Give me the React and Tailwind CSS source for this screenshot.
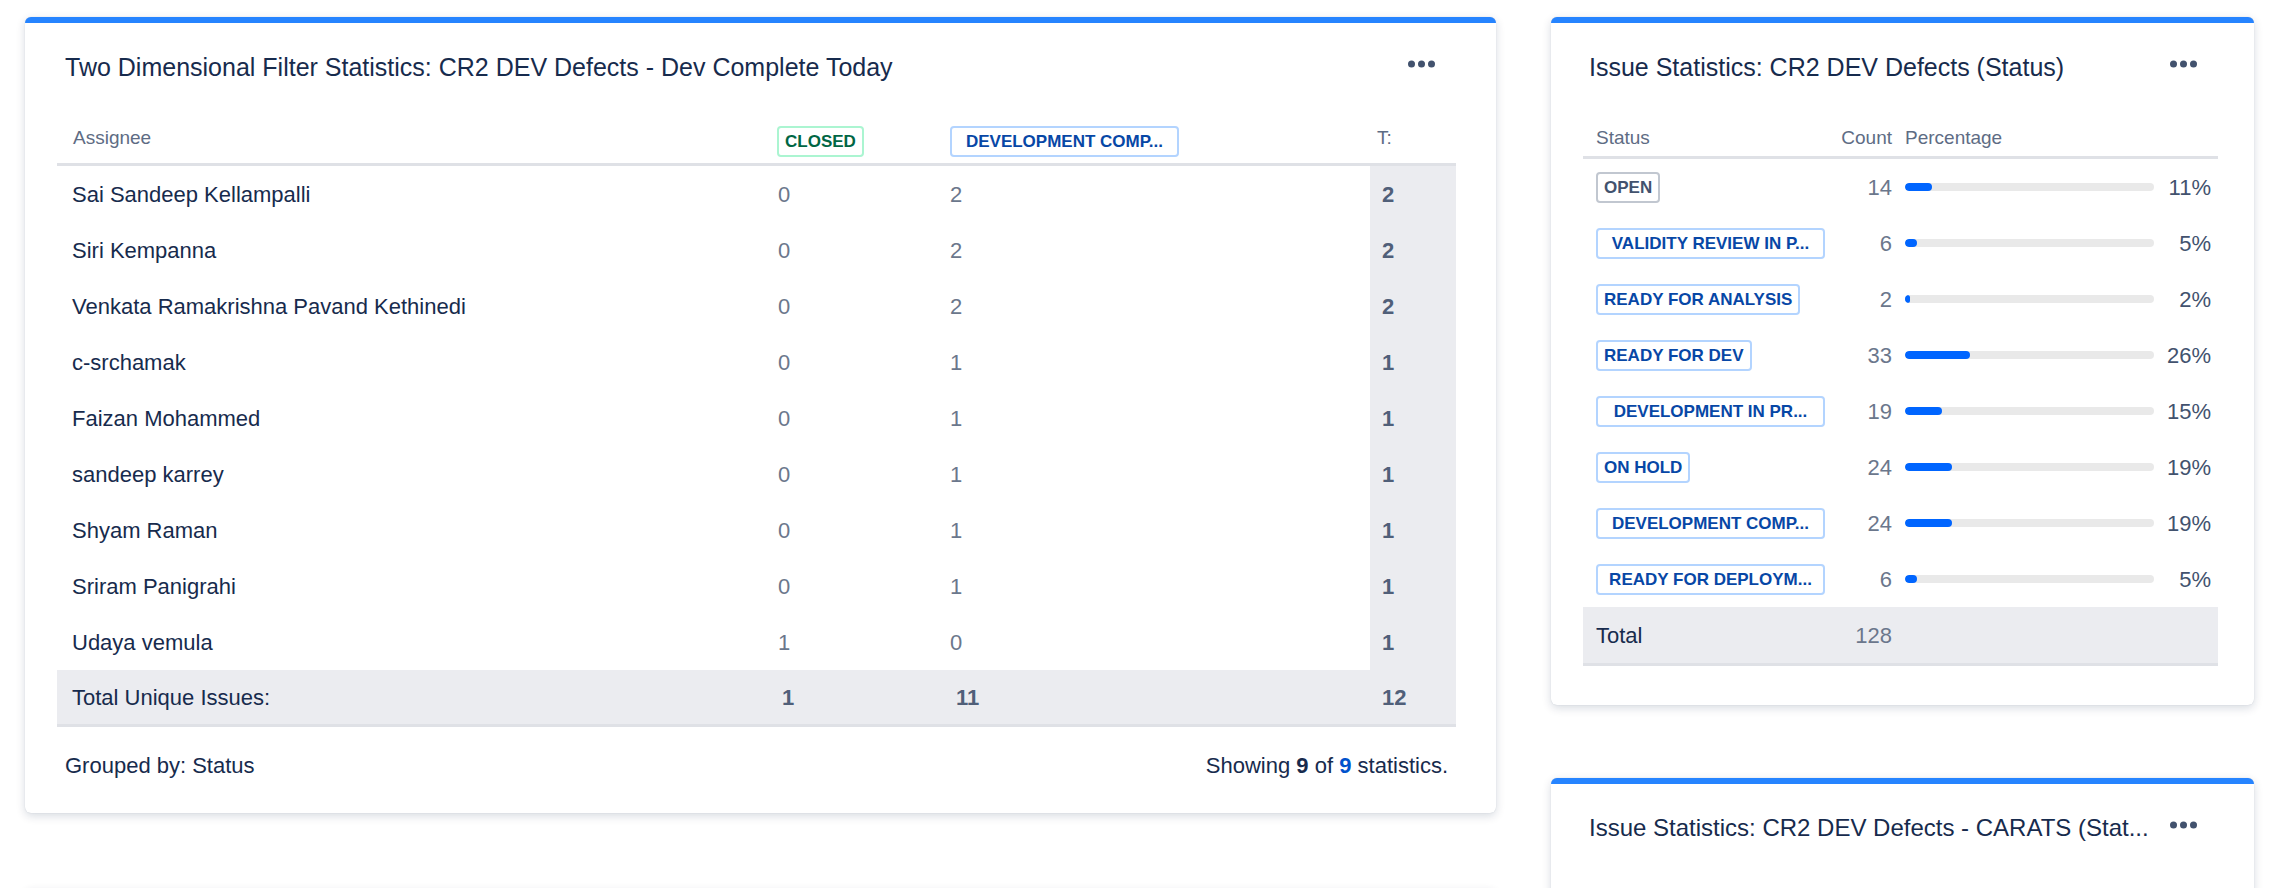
import React from 'react';

const rows = [
    { name: 'Sai Sandeep Kellampalli', closed: 0, dev: 2, total: 2 },
    { name: 'Siri Kempanna', closed: 0, dev: 2, total: 2 },
    { name: 'Venkata Ramakrishna Pavand Kethinedi', closed: 0, dev: 2, total: 2 },
    { name: 'c-srchamak', closed: 0, dev: 1, total: 1 },
    { name: 'Faizan Mohammed', closed: 0, dev: 1, total: 1 },
    { name: 'sandeep karrey', closed: 0, dev: 1, total: 1 },
    { name: 'Shyam Raman', closed: 0, dev: 1, total: 1 },
    { name: 'Sriram Panigrahi', closed: 0, dev: 1, total: 1 },
    { name: 'Udaya vemula', closed: 1, dev: 0, total: 1 },
];

const statuses = [
    { label: 'OPEN', tone: 'gray', count: 14, pct: 11 },
    { label: 'VALIDITY REVIEW IN P...', tone: 'blue', count: 6, pct: 5, fixed: true },
    { label: 'READY FOR ANALYSIS', tone: 'blue', count: 2, pct: 2 },
    { label: 'READY FOR DEV', tone: 'blue', count: 33, pct: 26 },
    { label: 'DEVELOPMENT IN PR...', tone: 'blue', count: 19, pct: 15, fixed: true },
    { label: 'ON HOLD', tone: 'blue', count: 24, pct: 19 },
    { label: 'DEVELOPMENT COMP...', tone: 'blue', count: 24, pct: 19, fixed: true },
    { label: 'READY FOR DEPLOYM...', tone: 'blue', count: 6, pct: 5, fixed: true },
];

const toneClasses = {
    gray: 'border-[#C1C7D0] text-[#42526E]',
    blue: 'border-[#B3D4FF] text-[#0747A6]',
    green: 'border-[#ABF5D1] text-[#006644]',
};

const Lozenge = ({ tone, children, fixed }) => (
    <span
        className={`inline-flex h-[31px] items-center rounded-[4px] border-2 px-[6px] text-[17px] font-bold leading-none whitespace-nowrap ${toneClasses[tone]} ${fixed ? 'w-[229px] justify-center' : ''}`}
    >
        {children}
    </span>
);

const Dots = () => (
    <svg width="27" height="8" viewBox="0 0 27 8" className="shrink-0">
        <circle cx="3.5" cy="4" r="3.5" fill="#42526E" />
        <circle cx="13.5" cy="4" r="3.5" fill="#42526E" />
        <circle cx="23.5" cy="4" r="3.5" fill="#42526E" />
    </svg>
);

const Card = ({ className = '', children }) => (
    <div className={`rounded-[6px] border-t-[6px] border-[#2684FF] bg-white shadow-[0_3px_10px_rgba(9,30,66,0.16),0_0_1px_rgba(9,30,66,0.2)] ${className}`}>
        {children}
    </div>
);

const CardHeader = ({ title, pad, size = 'text-[25px]' }) => (
    <div className={`flex items-center justify-between pt-[28px] ${pad}`}>
        <h2 className={`truncate leading-[32px] font-normal text-[#172B4D] ${size}`}>{title}</h2>
        <div className="mr-[21px] -mt-[6px] shrink-0">
            <Dots />
        </div>
    </div>
);

const TwoDimensional = () => (
    <Card className="w-[1471px]">
        <div className="pl-[32px] pr-[40px]">
            <CardHeader title="Two Dimensional Filter Statistics: CR2 DEV Defects - Dev Complete Today" pad="pl-[8px]" />

            <div className="mt-[30px]">
                <div className="grid h-[53px] grid-cols-[706px_172px_435px_86px] border-b-[3px] border-[#DFE1E6] text-[19px] text-[#5E6C84]">
                    <div className="flex items-center pl-[16px]">Assignee</div>
                    <div className="flex items-end pb-[6px] pl-[14px]">
                        <Lozenge tone="green">CLOSED</Lozenge>
                    </div>
                    <div className="flex items-end pb-[6px] pl-[15px]">
                        <Lozenge tone="blue" fixed>DEVELOPMENT COMP...</Lozenge>
                    </div>
                    <div className="flex items-center pl-[7px]">T:</div>
                </div>

                {rows.map((r) => (
                    <div key={r.name} className="grid h-[56px] grid-cols-[706px_172px_435px_86px] items-stretch text-[22px]">
                        <div className="flex items-center pl-[15px] text-[#172B4D]">{r.name}</div>
                        <div className="flex items-center pl-[15px] text-[#6B778C]">{r.closed}</div>
                        <div className="flex items-center pl-[15px] text-[#6B778C]">{r.dev}</div>
                        <div className="flex items-center bg-[#EBECF0] pl-[12px] font-bold text-[#505F79]">{r.total}</div>
                    </div>
                ))}

                <div className="grid h-[57px] grid-cols-[706px_172px_435px_86px] border-b-[3px] border-[#DFE1E6] bg-[#EBECF0] text-[22px]">
                    <div className="flex items-center pl-[15px] text-[#172B4D]">Total Unique Issues:</div>
                    <div className="flex items-center pl-[19px] font-bold text-[#505F79]">1</div>
                    <div className="flex items-center pl-[21px] font-bold text-[#505F79]">11</div>
                    <div className="flex items-center pl-[12px] font-bold text-[#505F79]">12</div>
                </div>
            </div>

            <div className="flex items-center justify-between px-[8px] pt-[25px] pb-[33px] text-[22px] leading-[28px] text-[#172B4D]">
                <span>Grouped by: Status</span>
                <span>
                    Showing <b className="font-bold text-[#172B4D]">9</b> of <b className="font-bold text-[#0052CC]">9</b> statistics.
                </span>
            </div>
        </div>
    </Card>
);

const IssueStatistics = () => (
    <Card className="w-[703px]">
        <div className="pl-[32px] pr-[36px] pb-[39px]">
            <CardHeader title="Issue Statistics: CR2 DEV Defects (Status)" pad="pl-[6px]" />

            <div className="mt-[37px]">
                <div className="grid h-[39px] grid-cols-[245px_64px_326px] border-b-[3px] border-[#DFE1E6] text-[19px] text-[#5E6C84]">
                    <div className="flex items-center pl-[13px]">Status</div>
                    <div className="flex items-center justify-end">Count</div>
                    <div className="flex items-center pl-[13px]">Percentage</div>
                </div>

                {statuses.map((s) => (
                    <div key={s.label} className="grid h-[56px] grid-cols-[245px_64px_326px] text-[22px]">
                        <div className="flex items-center pl-[13px]">
                            <Lozenge tone={s.tone} fixed={s.fixed}>{s.label}</Lozenge>
                        </div>
                        <div className="flex items-center justify-end text-[#6B778C]">{s.count}</div>
                        <div className="flex items-center pl-[13px]">
                            <div className="h-[8px] w-[249px] overflow-hidden rounded-full bg-[#E9E9E9]">
                                <div className="h-full rounded-full bg-[#0065FF]" style={{ width: `${s.pct}%` }} />
                            </div>
                            <span className="flex-1 pr-[7px] text-right text-[#42526E]">{s.pct}%</span>
                        </div>
                    </div>
                ))}

                <div className="grid h-[59px] grid-cols-[245px_64px_326px] border-b-[3px] border-[#DFE1E6] bg-[#EBECF0] text-[22px]">
                    <div className="flex items-center pl-[13px] text-[#172B4D]">Total</div>
                    <div className="flex items-center justify-end text-[#6B778C]">128</div>
                    <div />
                </div>
            </div>
        </div>
    </Card>
);

const CaratsStatistics = () => (
    <Card className="h-[300px] w-[703px]">
        <div className="pl-[32px] pr-[36px]">
            <CardHeader title="Issue Statistics: CR2 DEV Defects - CARATS (Stat..." pad="pl-[6px]" size="text-[24px]" />
        </div>
    </Card>
);

export default function App() {
    return (
        <div className="flex h-[888px] w-[2279px] items-start gap-[55px] overflow-hidden bg-white pt-[17px] pl-[25px] font-['Liberation_Sans',Arial,sans-serif]">
            <div className="flex flex-col gap-[76px]">
                <TwoDimensional />
                <Card className="h-[300px] w-[1471px]" />
            </div>
            <div className="flex flex-col gap-[73px]">
                <IssueStatistics />
                <CaratsStatistics />
            </div>
        </div>
    );
}
